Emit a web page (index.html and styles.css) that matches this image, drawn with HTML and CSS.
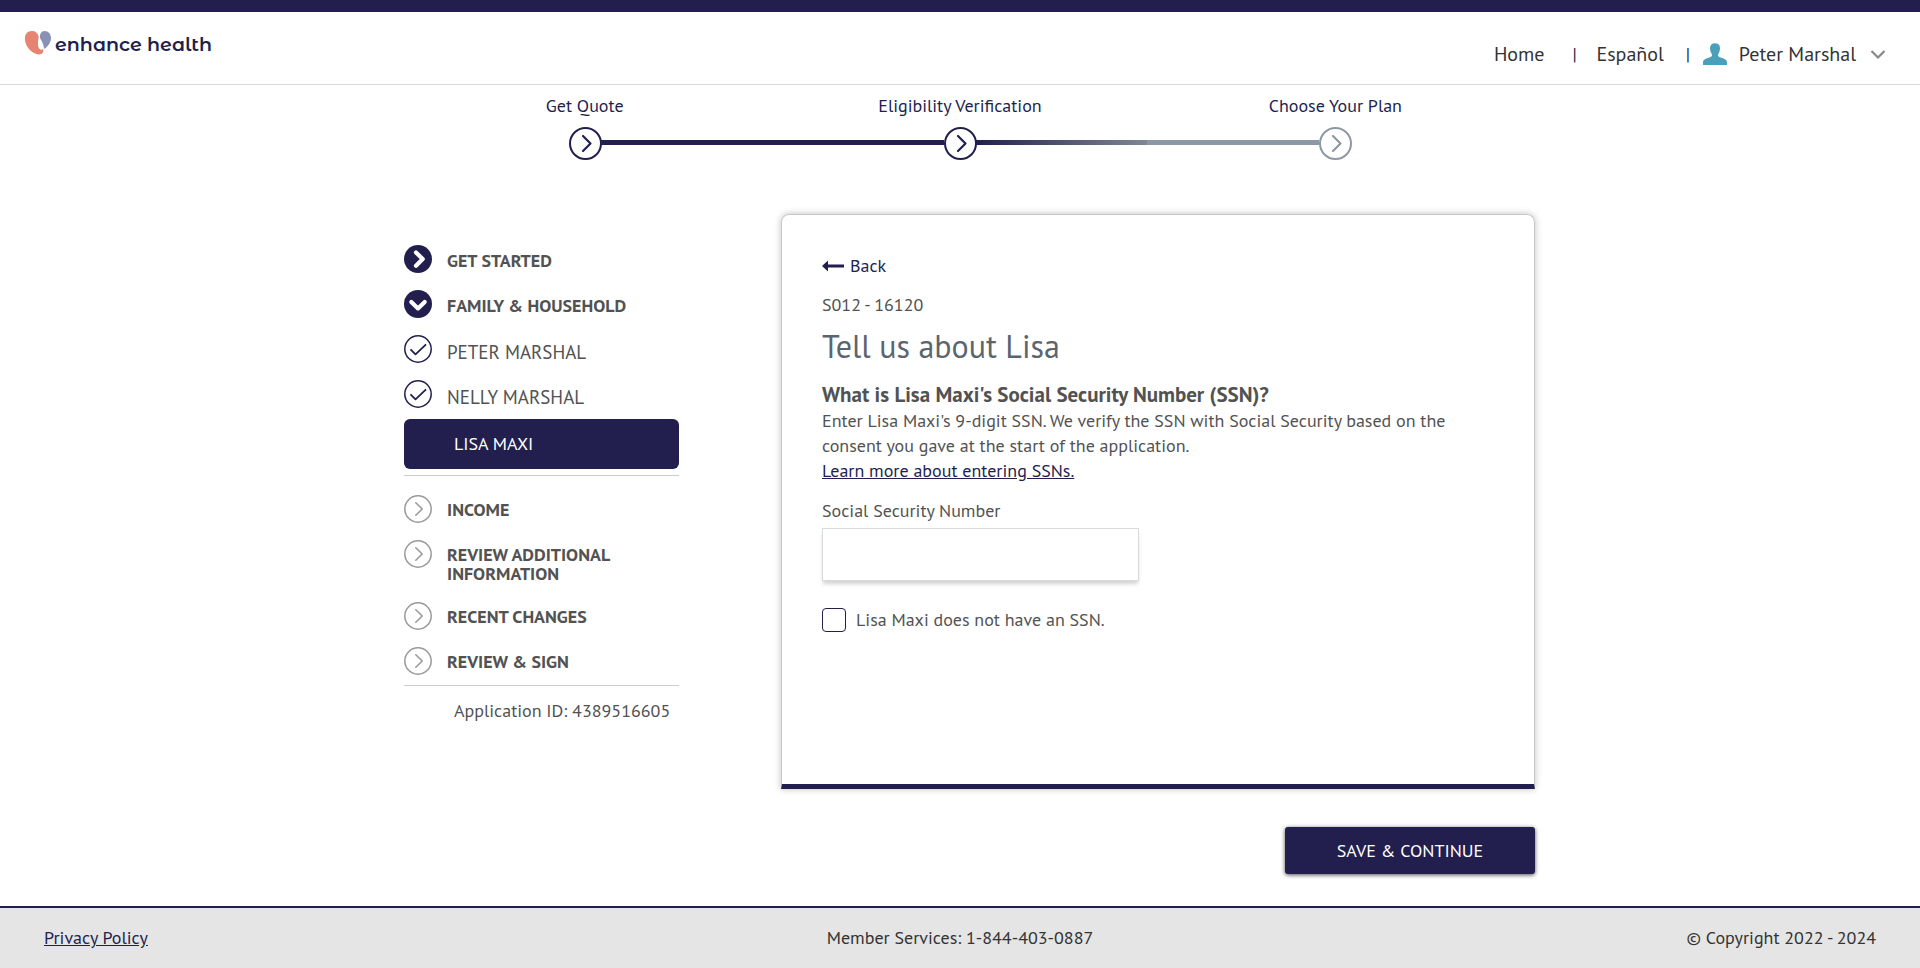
FILE: index.html
```html
<!DOCTYPE html>
<html lang="en">
<head>
<meta charset="utf-8">
<title>Enhance Health - Eligibility Verification</title>
<meta name="viewport" content="width=device-width, initial-scale=1">
<link rel="stylesheet" href="styles.css">
</head>
<body>
<svg class="sprite" aria-hidden="true">
  <symbol id="step" viewBox="0 0 34 34">
    <circle cx="17.500" cy="17.500" r="15.500" fill="#fff" stroke="currentColor" stroke-width="2"/>
    <path d="M15 10 22.500 17.500 15 25" fill="none" stroke="currentColor" stroke-width="2.2" stroke-linecap="round" stroke-linejoin="round"/>
  </symbol>
  <symbol id="todo" viewBox="0 0 28 28">
    <circle cx="14" cy="14" r="13.2" fill="none" stroke="currentColor" stroke-width="1.5"/>
    <path d="M11.8 7.8 18.2 14l-6.4 6.2" fill="none" stroke="currentColor" stroke-width="1.6" stroke-linecap="round" stroke-linejoin="round"/>
  </symbol>
  <symbol id="check" viewBox="0 0 28 28">
    <circle cx="14" cy="14" r="13.2" fill="none" stroke="currentColor" stroke-width="1.5"/>
    <path d="M7 14.8 11.5 19.3 21.5 9.8" fill="none" stroke="currentColor" stroke-width="1.8" stroke-linecap="round" stroke-linejoin="round"/>
  </symbol>
  <symbol id="solid" viewBox="0 0 28 28">
    <circle cx="14" cy="14" r="14" fill="currentColor"/>
    <path d="M12 7.5 18.7 14 12 20.7" fill="none" stroke="#fff" stroke-width="4.2" stroke-linecap="round" stroke-linejoin="round"/>
  </symbol>
  <symbol id="solid-down" viewBox="0 0 28 28">
    <circle cx="14" cy="14" r="14" fill="currentColor"/>
    <path d="M7.3 12 14 18.4 20.7 12" fill="none" stroke="#fff" stroke-width="4.2" stroke-linecap="round" stroke-linejoin="round"/>
  </symbol>
</svg>

<header class="header">
  <a class="logo" href="#" aria-label="enhance health">
    <svg class="logo-mark" viewBox="0 0 28 26" aria-hidden="true">
      <path d="M8 1C2.500 1 0.500 5 1 10C1.600 17 8 24 15 24.500C18.500 24.500 20 21.500 19 19C15.500 21.500 13.500 17 14 12C14 10 15 8 14.500 6C13.500 3 11.500 1 8 1Z" fill="#e68371"/>
      <path d="M20.500 1C24.500 1 27.200 4 27 8.500C26.700 13 23.500 17 20 19C19.800 14 17.500 11 16 8C15.500 4 17.500 1 20.500 1Z" fill="#8991b6"/>
    </svg>
    <span class="logo-name">enhance health</span>
  </a>
  <nav class="nav">
    <a class="nav-home" href="#">Home</a>
    <span class="bar">|</span>
    <a class="nav-lang" href="#">Español</a>
    <span class="bar">|</span>
    <button class="user" type="button">
      <svg class="user-icon" viewBox="0 0 24 22" aria-hidden="true"><path d="M12 0.300C15 0.300 17 2 17 5C17 8 16 10 15 11.500C14.600 13.500 16 14 18.500 14.800C22.500 16 24 17 24 20V22H0V20C0 17 1.500 16 5.500 14.800C8 14 9.400 13.500 9 11.500C8 10 7 8 7 5C7 2 9 0.300 12 0.300Z" fill="#4a9fba"/></svg>
      <span class="user-name">Peter Marshal</span>
      <svg class="user-arrow" viewBox="0 0 16 10" aria-hidden="true"><path d="M1.500 2 8 8.500 14.500 2" fill="none" stroke="#888" stroke-width="2.200"/></svg>
    </button>
  </nav>
</header>

<ol class="steps">
  <li class="step done"><span>Get Quote</span><svg class="step-icon" aria-hidden="true"><use href="#step"/></svg></li>
  <li class="step current"><span>Eligibility Verification</span><svg class="step-icon" aria-hidden="true"><use href="#step"/></svg></li>
  <li class="step next"><span>Choose Your Plan</span><svg class="step-icon" aria-hidden="true"><use href="#step"/></svg></li>
</ol>

<main class="main">
  <aside class="side">
    <ul class="menu">
      <li class="item"><svg class="icon" aria-hidden="true"><use href="#solid"/></svg><a class="section" href="#">GET STARTED</a></li>
      <li class="item"><svg class="icon" aria-hidden="true"><use href="#solid-down"/></svg><a class="section" href="#">FAMILY &amp; HOUSEHOLD</a></li>
      <li class="item"><svg class="icon" aria-hidden="true"><use href="#check"/></svg><a class="person" href="#">PETER MARSHAL</a></li>
      <li class="item"><svg class="icon" aria-hidden="true"><use href="#check"/></svg><a class="person" href="#">NELLY MARSHAL</a></li>
    </ul>
    <a class="active" href="#" aria-current="page">LISA MAXI</a>
    <ul class="menu later">
      <li class="item"><svg class="icon" aria-hidden="true"><use href="#todo"/></svg><a class="section" href="#">INCOME</a></li>
      <li class="item"><svg class="icon" aria-hidden="true"><use href="#todo"/></svg><a class="section" href="#">REVIEW ADDITIONAL INFORMATION</a></li>
      <li class="item"><svg class="icon" aria-hidden="true"><use href="#todo"/></svg><a class="section" href="#">RECENT CHANGES</a></li>
      <li class="item"><svg class="icon" aria-hidden="true"><use href="#todo"/></svg><a class="section" href="#">REVIEW &amp; SIGN</a></li>
    </ul>
    <p class="app-id">Application ID: 4389516605</p>
  </aside>

  <form class="form">
    <section class="card">
      <a class="back" href="#">
        <svg class="back-icon" viewBox="0 0 22 12" aria-hidden="true"><path d="M0 6 6 0.500V4.500H22V7.500H6V11.500Z" fill="currentColor"/></svg>
        Back
      </a>
      <p class="code">S012 - 16120</p>
      <h1 class="title">Tell us about Lisa</h1>
      <h2 class="question">What is Lisa Maxi's Social Security Number (SSN)?</h2>
      <p class="text">Enter Lisa Maxi's 9-digit SSN. We verify the SSN with Social Security based on the<br>consent you gave at the start of the application.</p>
      <a class="link" href="#">Learn more about entering SSNs.</a>
      <label class="label" for="ssn">Social Security Number</label>
      <input class="input" id="ssn" type="text" inputmode="numeric">
      <div class="option">
        <input class="box" id="no-ssn" type="checkbox">
        <label for="no-ssn">Lisa Maxi does not have an SSN.</label>
      </div>
    </section>
    <button class="save" type="submit">SAVE &amp; CONTINUE</button>
  </form>
</main>

<footer class="footer">
  <a class="link" href="#">Privacy Policy</a>
  <span>Member Services: 1-844-403-0887</span>
  <span class="copy">© Copyright 2022 - 2024</span>
</footer>
</body>
</html>
```
FILE: styles.css
```css
* {
  box-sizing: border-box;
}

body {
  --navy: #221f4e;
  --text: #525252;
  margin: 0;
  min-height: 100vh;
  display: flex;
  flex-direction: column;
  background: #fff;
  color: var(--text);
  font-family: "PT Sans", "Noto Sans", sans-serif;
  font-size: 18px;
  line-height: 25px;
}

a {
  color: inherit;
  text-decoration: none;
}

button,
input {
  font: inherit;
  color: inherit;
}

p,
h1,
h2,
ul,
ol {
  margin: 0;
  padding: 0;
  list-style: none;
}

.sprite {
  display: none;
}

.header {
  display: flex;
  justify-content: space-between;
  align-items: flex-start;
  height: 85px;
  padding: 18px 34px 0 24px;
  border-top: 12px solid var(--navy);
  border-bottom: 1px solid #d8d8d8;
}

.logo {
  display: flex;
  align-items: flex-start;
  gap: 3px;
}

.logo-mark {
  width: 28px;
  height: 26px;
}

.logo-name {
  padding-top: 3px;
  color: var(--navy);
  font-family: "Montserrat Alternates", Lato, sans-serif;
  font-size: 19px;
  font-weight: 600;
  line-height: 24px;
}

.nav {
  display: flex;
  align-items: center;
  padding-top: 12px;
  color: #333;
  font-size: 20px;
  line-height: 24px;
}

.bar {
  width: 6px;
  margin: 0 18px 0 28px;
  color: var(--navy);
  font-size: 18px;
}

.nav-lang + .bar {
  margin: 0 11px 0 22px;
}

.user {
  display: flex;
  align-items: center;
  padding: 0;
  border: 0;
  background: none;
}

.user-icon {
  width: 24px;
  height: 22px;
  margin-right: 12px;
}

.user-arrow {
  width: 16px;
  height: 10px;
  margin-left: 14px;
}

.steps {
  display: grid;
  grid-template-columns: repeat(3, 1fr);
  width: 100%;
  max-width: 1126px;
  margin: 8px auto 0;
  color: var(--navy);
}

.step {
  position: relative;
  display: flex;
  flex-direction: column;
  align-items: center;
  gap: 8px;
}

.step + .step::before {
  content: "";
  position: absolute;
  right: calc(50% + 16px);
  bottom: 15px;
  width: calc(100% - 32px);
  height: 5px;
  background: var(--navy);
}

.step.next::before {
  background: linear-gradient(to right, var(--navy), #7f8892 50%, #8d98a5 50%);
}

.step-icon {
  width: 34px;
  height: 34px;
}

.next .step-icon {
  color: #8d98a5;
}

.main {
  display: flex;
  justify-content: space-between;
  align-items: flex-start;
  width: 100%;
  max-width: 1150px;
  margin: 54px auto 32px;
  padding-left: 19px;
}

.side {
  width: 275px;
  padding-top: 31px;
}

.menu {
  display: flex;
  flex-direction: column;
  gap: 17px;
}

.item {
  display: flex;
  align-items: flex-start;
  gap: 15px;
}

.icon {
  flex: none;
  width: 28px;
  height: 28px;
  color: var(--navy);
}

.section {
  padding-top: 6px;
  font-weight: 600;
  line-height: 19px;
}

.person {
  padding-top: 6px;
  font-size: 19px;
  line-height: 22px;
}

.active {
  display: block;
  margin-top: 11px;
  padding: 12px 50px 13px;
  border-radius: 6px;
  background: var(--navy);
  color: #fff;
}

.later {
  margin-top: 6px;
  padding: 19px 0 10px;
  border: solid #ccc;
  border-width: 1px 0;
}

.later .icon {
  color: #999;
}

.later .section {
  padding: 5px 0 2px;
}

.app-id {
  padding: 12px 0 0 50px;
  white-space: nowrap;
}

.form {
  display: flex;
  flex-direction: column;
  align-items: flex-end;
  gap: 38px;
  width: 754px;
}

.card {
  display: flex;
  flex-direction: column;
  align-items: flex-start;
  width: 100%;
  min-height: 575px;
  padding: 38px 40px;
  border: 1px solid #c8c8c8;
  border-bottom: 5px solid var(--navy);
  border-radius: 8px 8px 0 0;
  box-shadow: 0 0 7px rgba(0, 0, 0, 0.25);
}

.back {
  display: flex;
  align-items: center;
  gap: 6px;
  color: var(--navy);
}

.back-icon {
  width: 22px;
  height: 12px;
}

.code {
  margin-top: 14px;
}

.title {
  margin-top: 9px;
  color: #5b6570;
  font-size: 32px;
  font-weight: 400;
  line-height: 40px;
}

.question {
  margin-top: 16px;
  font-size: 21px;
  font-weight: 600;
  line-height: 26px;
}

.link {
  color: var(--navy);
  text-decoration: underline;
}

.label {
  margin-top: 15px;
}

.input {
  width: 317px;
  height: 53px;
  margin-top: 5px;
  padding: 0 12px;
  border: 1px solid #d8dbdb;
  background: #fff;
  box-shadow: 0 4px 4px -1px rgba(0, 0, 0, 0.18);
}

.option {
  display: flex;
  align-items: center;
  gap: 10px;
  margin-top: 26px;
}

.box {
  appearance: none;
  width: 24px;
  height: 24px;
  margin: 0;
  border: 1px solid var(--navy);
  border-radius: 4px;
  background: #fff;
}

.box:checked {
  background: var(--navy);
}

.save {
  width: 250px;
  height: 47px;
  padding: 0;
  border: 0;
  border-radius: 3px;
  background: var(--navy);
  box-shadow: 0 1px 4px rgba(0, 0, 0, 0.7);
  color: #fff;
}

.footer {
  display: grid;
  grid-template-columns: 1fr auto 1fr;
  align-items: center;
  margin-top: auto;
  padding: 17px 44px 18px;
  border-top: 2px solid var(--navy);
  background: #e5e5e5;
  color: #333;
}

.footer .link {
  justify-self: start;
}

.copy {
  justify-self: end;
}
```
